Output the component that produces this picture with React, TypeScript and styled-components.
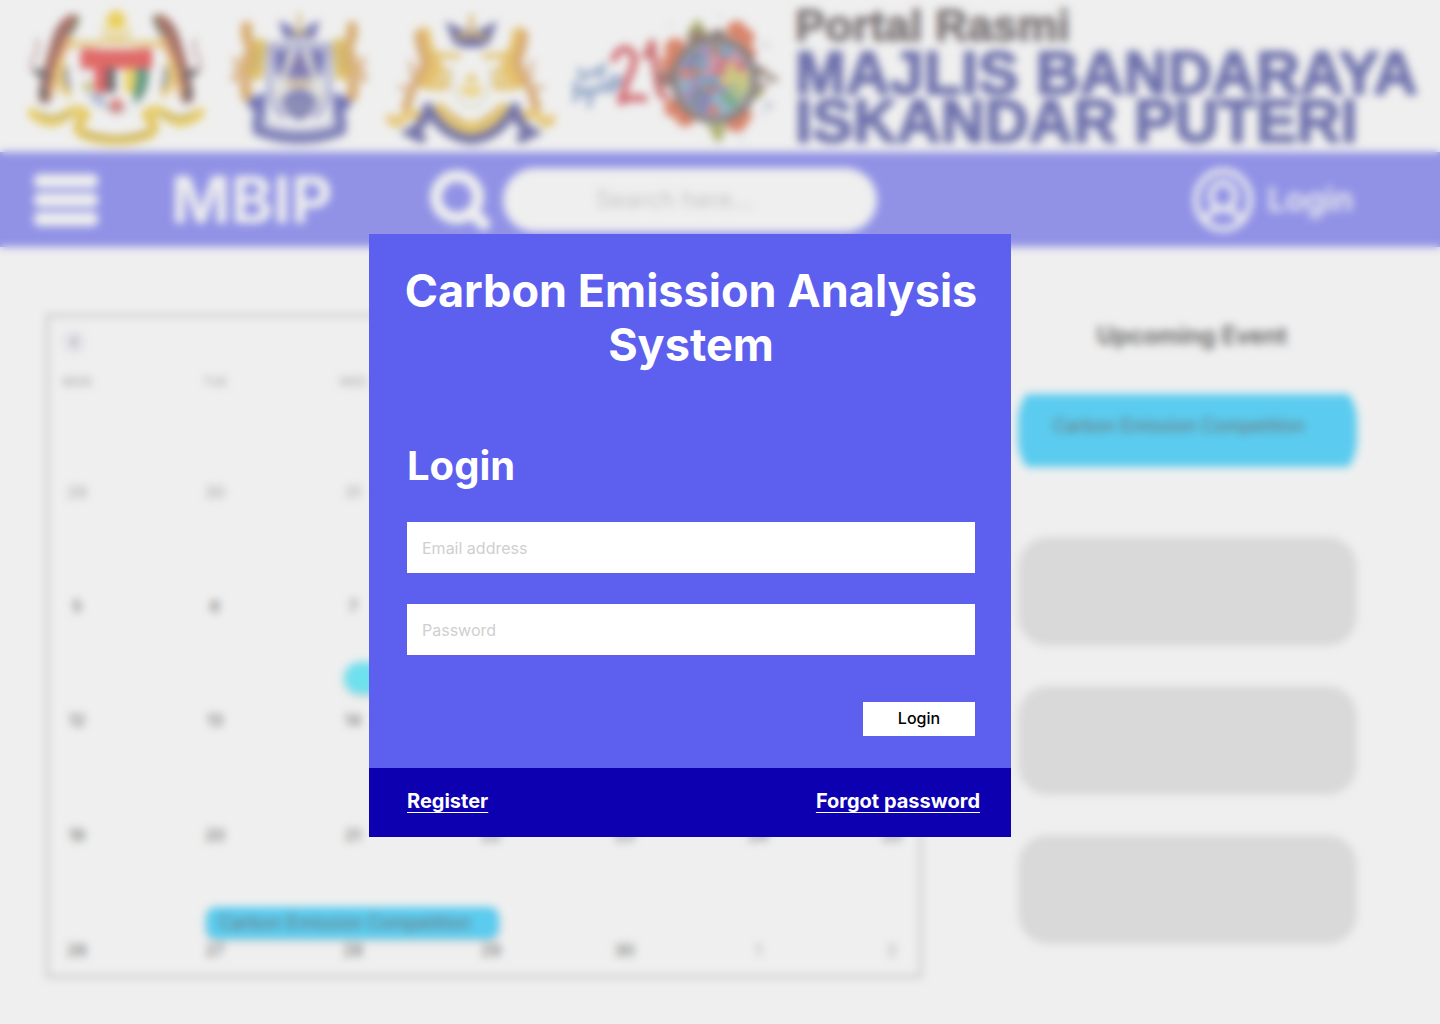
import React from "react";
import styled, { createGlobalStyle } from "styled-components";
import { ChevronLeft } from "lucide-react";

const GlobalStyle = createGlobalStyle`
  *, *::before, *::after { box-sizing: border-box; }
  body {
    margin: 0;
    background: #ffffff;
    font-family: Inter, "Liberation Sans", sans-serif;
  }
  h1, h2, h3, p, ul { margin: 0; padding: 0; }
  button, input { font-family: inherit; }
`;

const Page = styled.div`
  min-height: 100vh;
  background: #ffffff;
`;

/* ---------- banner ---------- */

const Banner = styled.header`
  display: flex;
  align-items: flex-start;
  gap: 16px;
  height: 152px;
  padding: 8px 0 0 28px;
  overflow: hidden;
`;

const Crest = styled.svg`
  flex: none;
  height: 140px;
`;

const BannerText = styled.div`
  flex: none;
  font-family: "Liberation Sans", Arial, sans-serif;
  font-weight: 700;
  white-space: nowrap;
`;

const BannerKicker = styled.p`
  margin-bottom: 5px;
  font-size: 45px;
  line-height: 36px;
  color: #33262b;
  -webkit-text-stroke: 1px currentColor;
`;

const BannerName = styled.p`
  font-size: 61px;
  line-height: 48px;
  color: #23288c;
  -webkit-text-stroke: 2px currentColor;
`;

/* ---------- navigation ---------- */

const NavBar = styled.nav`
  display: flex;
  align-items: center;
  height: 95px;
  padding: 0 87px 0 34px;
  background: #5d5fef;
  color: #ffffff;
`;

const MenuButton = styled.button`
  display: flex;
  flex-direction: column;
  gap: 5px;
  width: 64px;
  padding: 0;
  border: 0;
  background: none;
`;

const MenuBar = styled.span`
  height: 14px;
  border-radius: 5px;
  background: #ffffff;
`;

const Brand = styled.span`
  margin-left: 73px;
  font-size: 64px;
  line-height: 76px;
  font-weight: 700;
`;

const SearchForm = styled.form`
  display: flex;
  align-items: center;
  gap: 13px;
  margin-left: 98px;
`;

const SearchInput = styled.input`
  width: 374px;
  height: 64px;
  padding: 0 92px;
  border: 0;
  border-radius: 32px;
  background: #ffffff;
  font-size: 24px;
  &::placeholder { color: #b8b8b8; opacity: 1; }
`;

const AccountLink = styled.a`
  display: flex;
  align-items: center;
  gap: 14px;
  margin-left: auto;
  color: #ffffff;
  font-size: 32px;
  line-height: 40px;
  font-weight: 600;
  text-decoration: none;
`;

/* ---------- calendar and events ---------- */

const Main = styled.main`
  display: flex;
  align-items: flex-start;
  gap: 96px;
  padding: 67px 83px 46px 46px;
`;

const Calendar = styled.section`
  flex: 1;
  min-width: 0;
  padding: 13px 12px 0 13px;
  border: 3px solid #b8b8b8;
`;

const MonthButton = styled.button`
  display: grid;
  place-items: center;
  width: 24px;
  height: 24px;
  padding: 0;
  border: 0;
  border-radius: 50%;
  background: #ececf6;
  color: #55556a;
`;

const MonthTable = styled.table`
  width: 100%;
  margin-top: 19px;
  border-collapse: collapse;
  table-layout: fixed;
`;

const WideCol = styled.col`width: 138px;`;
const LastCol = styled.col`width: 30px;`;

const WeekRow = styled.tr<{ $height: number }>`
  height: ${(p) => p.$height}px;
`;

const DayHead = styled.th`
  padding: 0;
  vertical-align: top;
  text-align: left;
  font-size: 12px;
  line-height: 18px;
  font-weight: 500;
  color: #8c8c8c;
`;

const DayCell = styled.td<{ $muted: boolean }>`
  position: relative;
  padding: 0;
  vertical-align: top;
  font-size: 16px;
  line-height: 18px;
  font-weight: 500;
  color: ${(p) => (p.$muted ? "#8c8c8c" : "#262626")};
`;

const DayLabel = styled.span`
  display: block;
  width: 30px;
  text-align: center;
`;

const CalendarEvent = styled.span<{
  $tone: string;
  $top: number;
  $width: number;
  $round: number;
}>`
  position: absolute;
  top: ${(p) => p.$top}px;
  left: 6px;
  width: ${(p) => p.$width}px;
  height: 32px;
  padding-left: 13px;
  border-radius: ${(p) => p.$round}px;
  background: ${(p) => p.$tone};
  box-shadow: 0 2px 4px rgba(0, 0, 0, 0.25);
  color: #222222;
  font-size: 18px;
  line-height: 31px;
  font-weight: 400;
  white-space: nowrap;
`;

const Aside = styled.aside`
  width: 339px;
`;

const AsideTitle = styled.h2`
  padding: 7px 0 0 9px;
  font-size: 24px;
  line-height: 29px;
  font-weight: 600;
  text-align: center;
  color: #000000;
`;

const EventCard = styled.article`
  position: relative;
  z-index: 0;
  height: 73px;
  margin: 44px 0 70px;
  padding: 20px 35px;
  overflow: hidden;
  font-size: 18px;
  line-height: 24px;
  color: #222222;
  white-space: nowrap;
  &::before {
    content: "";
    position: absolute;
    inset: -18px 0;
    z-index: -1;
    border-radius: 44px;
    background: #00c2ff;
  }
`;

const EmptyCard = styled.div`
  height: 109px;
  border-radius: 30px;
  background: #d9d9d9;
  & + & { margin-top: 40px; }
`;

/* ---------- login dialog ---------- */

const Overlay = styled.div`
  position: fixed;
  inset: 0;
  display: flex;
  justify-content: center;
  align-items: flex-start;
  padding: 234px 60px 0 0;
  background: rgba(217, 217, 217, 0.42);
  backdrop-filter: blur(4px);
`;

const Dialog = styled.section`
  width: 642px;
  background: #5d5fef;
`;

const DialogBody = styled.form`
  display: flex;
  flex-direction: column;
  padding: 30px 36px 32px 38px;
`;

const DialogTitle = styled.h1`
  margin: 0 -8px 70px;
  color: #ffffff;
  font-size: 45px;
  line-height: 54px;
  font-weight: 700;
  text-align: center;
`;

const DialogHeading = styled.h2`
  margin-bottom: 32px;
  color: #ffffff;
  font-size: 40px;
  line-height: 48px;
  font-weight: 700;
`;

const Field = styled.input`
  width: 100%;
  height: 51px;
  padding: 0 15px;
  border: 0;
  border-radius: 0;
  background: #ffffff;
  color: #000000;
  font-size: 16px;
  & + & { margin-top: 31px; }
  &::placeholder { color: #cfcfcf; opacity: 1; }
`;

const SubmitButton = styled.button`
  align-self: flex-end;
  width: 112px;
  height: 34px;
  margin-top: 47px;
  padding: 0 0 2px;
  border: 0;
  background: #ffffff;
  color: #000000;
  font-size: 16px;
  font-weight: 500;
`;

const DialogFooter = styled.footer`
  display: flex;
  justify-content: space-between;
  align-items: center;
  height: 69px;
  padding: 0 31px 4px 38px;
  background: #0c00b1;
`;

const FooterLink = styled.a`
  color: #ffffff;
  font-size: 20px;
  line-height: 24px;
  font-weight: 700;
  text-decoration: underline;
  text-decoration-thickness: 1px;
  text-underline-offset: 4px;
  text-decoration-skip-ink: none;
`;

/* ---------- drawings ---------- */

const FederalHalf = () => (
  <g fill="none" strokeLinecap="round">
    <path d="M216 62C182 80 174 120 160 170S136 250 134 292" stroke="#8a2a1c" strokeWidth="38" />
    <path d="M206 118C184 156 168 205 150 286" stroke="#e88a2c" strokeWidth="20" />
    <path d="M232 52C228 72 218 90 208 102" stroke="#4a4a20" strokeWidth="14" />
    <path d="M180 80l16 12M170 110l18 10M162 140l16 10M150 190l14 8M142 230l12 8" stroke="#3c1c14" strokeWidth="7" />
    <path d="M110 118C128 150 86 180 96 206Q106 226 132 220" stroke="#a86c6c" strokeWidth="8" />
    <path d="M112 216l26 10M130 260l6 34" stroke="#1c1c22" strokeWidth="20" />
    <path d="M186 190C174 220 178 262 206 282" stroke="#efc030" strokeWidth="20" />
    <path d="M200 205Q194 235 208 262" stroke="#222233" strokeWidth="10" />
    <path d="M214 138C240 118 262 136 280 132Q310 120 348 130" stroke="#e6b82c" strokeWidth="15" />
    <path d="M96 338Q150 384 190 350T258 344" stroke="#f0c418" strokeWidth="30" />
    <path d="M120 340Q160 356 214 346" stroke="#a08414" strokeWidth="8" />
    <path d="M246 358Q228 372 242 398Q290 420 348 420" stroke="#e8b808" strokeWidth="30" />
    <path d="M258 400Q300 412 348 412" stroke="#a08414" strokeWidth="9" />
  </g>
);

const FederalCrest = () => (
  <Crest viewBox="84 24 552 420" width="184" role="img" aria-label="Malaysia coat of arms">
    <path d="M306 82A46 40 0 0 0 392 82" fill="none" stroke="#f2dc70" strokeWidth="14" />
    <circle cx="348" cy="58" r="25" fill="#f6c400" />
    <path d="M348 26l6 14 14-8-2 16 16 2-10 12 12 12-18 2 2 16-14-8-6 14-6-14-14 8 2-16-18-2 12-12-10-12 16-2-2-16 14 8z" fill="#f6c800" />
    <path d="M310 98Q348 124 388 98" fill="none" stroke="#ecc850" strokeWidth="10" />
    <path d="M250 195V240Q262 320 348 344Q436 320 446 240V195Z" fill="#ffffff" stroke="#c8c8cc" strokeWidth="4" />
    <path d="M242 144Q348 156 456 144V206H242Z" fill="#e41414" />
    <path d="M268 178h12M300 180h12M336 180h12M372 180h12M408 178h12" stroke="#f08030" strokeWidth="7" />
    <path d="M284 200h36v78h-36z" fill="#e01010" />
    <path d="M320 204h26v74h-26z" fill="#101018" />
    <path d="M374 206h32v72h-32z" fill="#f6cc10" />
    <path d="M408 206h38q2 76-42 106l-4-36q8-16 8-36z" fill="#0c6840" />
    <path d="M262 282l46-2 16 44Q282 314 262 282z" fill="#8ca4d0" />
    <circle cx="264" cy="260" r="14" fill="#a8a828" />
    <circle cx="349" cy="318" r="22" fill="#e03838" />
    <path d="M322 324h54" stroke="#708068" strokeWidth="6" />
    <FederalHalf />
    <g transform="translate(696 0) scale(-1 1)"><FederalHalf /></g>
  </Crest>
);

const CityHalf = () => (
  <g fill="none" strokeLinecap="round">
    <path d="M740 80Q736 120 758 142Q726 186 740 290" stroke="#d8902c" strokeWidth="34" />
    <path d="M780 134L770 222" stroke="#dcac18" strokeWidth="38" />
    <path d="M762 160l22 8M762 190l18 6" stroke="#8c6a30" strokeWidth="6" />
    <path d="M704 176Q720 200 700 236L736 244" stroke="#dca060" strokeWidth="15" />
    <path d="M808 140V250Q816 330 850 350" stroke="#5a5fae" strokeWidth="12" />
    <path d="M822 148h56l-44 92q-12-40-12-92z" fill="#2c2c98" />
    <path d="M868 160L838 300" stroke="#e0dcc0" strokeWidth="12" />
    <path d="M752 302l38-14V340l-36-20z" fill="#2c309c" stroke="#2c309c" strokeWidth="16" />
    <path d="M774 354V390Q830 414 898 414" stroke="#3c409e" strokeWidth="34" />
    <path d="M796 326L800 368Q840 388 898 388" stroke="#9a9ecc" strokeWidth="8" />
    <path d="M842 68l24 12 28 20v12h-38z" fill="#2c2c98" stroke="#2c2c98" strokeWidth="7" />
  </g>
);

const CityCrest = () => (
  <Crest viewBox="684 24 426 420" width="142" role="img" aria-label="Iskandar Puteri City Council crest">
    <path d="M826 146h144v120Q966 340 898 366Q830 340 826 266z" fill="#e8e8f2" />
    <path d="M898 134l40 100h-80z" fill="#3c3898" />
    <path d="M864 240h68v22h-68z" fill="#b89860" />
    <path d="M842 300Q898 234 954 300Q944 350 898 360Q852 350 842 300z" fill="#44459a" />
    <path d="M852 308h92M860 328h76" stroke="#9094ac" strokeWidth="5" />
    <path d="M898 184v12" stroke="#b02040" strokeWidth="12" />
    <path d="M804 134h188" stroke="#6c70b4" strokeWidth="12" />
    <CityHalf />
    <g transform="translate(1796 0) scale(-1 1)"><CityHalf /></g>
    <path d="M898 40V90M872 104Q898 86 924 104" fill="none" stroke="#c8a448" strokeWidth="12" />
  </Crest>
);

const StateHalf = () => (
  <g fill="none" strokeLinecap="round">
    <path d="M130 104Q130 140 152 170Q172 210 134 244" stroke="#eeb020" strokeWidth="46" />
    <path d="M116 106Q122 150 136 184Q126 220 98 262L78 322" stroke="#d4882c" strokeWidth="27" />
    <path d="M58 262h52M88 186Q106 204 92 226" stroke="#d89c64" strokeWidth="13" />
    <path d="M160 166L234 168M168 232L202 250M150 262h46M180 200l24 24" stroke="#e8b020" strokeWidth="17" />
    <path d="M32 356Q50 380 70 354T116 350" stroke="#f0bc38" strokeWidth="30" />
    <path d="M144 322Q134 376 92 398L124 414" stroke="#2a2a84" strokeWidth="30" />
    <path d="M180 330Q218 384 274 384" stroke="#ecb828" strokeWidth="42" />
    <path d="M148 330Q196 412 274 418" stroke="#2e2e84" strokeWidth="30" />
    <path d="M196 326l24 28M230 346l14 36" stroke="#c89428" strokeWidth="8" />
    <path d="M204 72l38 20 28 4v34h-44z" fill="#24247e" stroke="#24247e" strokeWidth="9" />
    <path d="M216 200Q210 310 274 324" stroke="#d0d0a8" strokeWidth="7" />
  </g>
);

const StateCrest = () => (
  <Crest viewBox="18 24 507 420" width="169" role="img" aria-label="Johor coat of arms">
    <StateHalf />
    <g transform="translate(548 0) scale(-1 1)"><StateHalf /></g>
    <path d="M274 44v46M230 114Q274 90 318 114" fill="none" stroke="#d49c30" strokeWidth="15" />
    <path d="M240 254A34 34 0 1 0 308 254Q274 282 240 254Z" fill="#f6bc08" />
    <path d="M274 214l8 15 16 2-12 12 3 16-15-8-15 8 3-16-12-12 16-2z" fill="#f0c040" />
    <path d="M240 136h68" stroke="#2c2c84" strokeWidth="12" />
  </Crest>
);

const mosaicTones = [
  "#2c78b8", "#e0341c", "#ecb81c", "#7a50a4", "#28884c", "#dc5c7c", "#3c3ca4",
  "#ccd028", "#8c4424", "#50a0c8", "#d42838", "#344468", "#90b040",
];

const mosaicRings = [
  { count: 1, radius: 0 },
  { count: 6, radius: 30 },
  { count: 12, radius: 60 },
  { count: 18, radius: 90 },
];

const mosaicTiles = mosaicRings.flatMap(({ count, radius }, ring) =>
  Array.from({ length: count }, (_, i) => ({
    x: Math.round(1004 + radius * Math.cos((i * 2 * Math.PI) / count + ring)),
    y: Math.round(240 + radius * Math.sin((i * 2 * Math.PI) / count + ring)),
    tone: mosaicTones[(i * 5 + ring * 3) % mosaicTones.length],
  })),
);

const FestivalLogo = () => (
  <Crest viewBox="573 24 624 420" width="208" role="img" aria-label="Visit Johor festival">
    <g fill="none" strokeLinecap="round" strokeLinejoin="round">
      <path d="M600 208q4 42 20 22t16-12 16-6 10 12 10-30M588 246q-6 50 6 30t20 10q10-30 18-14t16-2 14-4 12-6 14 4 22-12 10-8M632 284l-4 34M590 286l-6 16M700 228q-10 28 12 26" stroke="#6c8cc0" strokeWidth="15" />
      <path d="M702 176Q722 134 750 152T744 236L722 304Q756 288 792 296" stroke="#cc2430" strokeWidth="22" />
      <path d="M798 168L816 128L832 240Q836 286 856 290" stroke="#c42c30" strokeWidth="22" />
    </g>
    <g fill="#d8481c">
      <circle cx="886" cy="146" r="32" />
      <circle cx="868" cy="190" r="26" />
      <circle cx="1070" cy="92" r="30" />
      <circle cx="1098" cy="112" r="26" />
      <circle cx="1102" cy="160" r="26" />
      <circle cx="880" cy="324" r="28" />
      <circle cx="916" cy="350" r="30" />
      <circle cx="1070" cy="364" r="32" />
      <circle cx="1092" cy="346" r="24" />
    </g>
    <g fill="#8c9424">
      <path d="M918 104l34-50 34 50z" />
      <path d="M980 374h64l-28 60z" />
      <circle cx="1134" cy="280" r="14" />
    </g>
    <circle cx="954" cy="118" r="32" fill="#6c4c28" />
    <circle cx="1014" cy="112" r="26" fill="#5c4434" />
    <circle cx="858" cy="236" r="26" fill="#7c3c34" />
    <circle cx="1004" cy="240" r="132" fill="#4c3c3c" />
    <circle cx="1004" cy="240" r="112" fill="#8490a8" />
    {mosaicTiles.map(({ x, y, tone }, i) => (
      <circle key={i} cx={x} cy={y} r="15" fill={tone} />
    ))}
    <path d="M1126 224q26-16 40 4t26 4M1124 262q30 14 28-18M1128 204l26 6" fill="none" stroke="#70503c" strokeWidth="15" />
    <g fill="#c0c4dc">
      <circle cx="870" cy="74" r="6" /><circle cx="1020" cy="46" r="6" />
      <circle cx="1158" cy="136" r="9" /><circle cx="1166" cy="316" r="14" />
      <circle cx="1086" cy="420" r="6" /><circle cx="1146" cy="340" r="7" />
    </g>
  </Crest>
);

const SearchIcon = () => (
  <svg width="60" height="60" viewBox="0 0 60 60" fill="none" aria-hidden="true">
    <circle cx="27" cy="27" r="21" stroke="#fff" strokeWidth="12" />
    <path d="M43 43l11 11" stroke="#fff" strokeWidth="13" strokeLinecap="round" />
  </svg>
);

const UserIcon = () => (
  <svg width="60" height="64" viewBox="0 0 60 64" fill="none" stroke="#fff" strokeWidth="6" aria-hidden="true">
    <ellipse cx="30" cy="32" rx="27" ry="29" />
    <ellipse cx="30" cy="28" rx="12" ry="13" />
    <path d="M12 53Q17 41 30 41T48 53" />
  </svg>
);

/* ---------- data ---------- */

const dayNames = ["MON", "TUE", "WED", "THU", "FRI", "SAT", "SUN"];
const weeks = [
  [29, 30, 31, 1, 2, 3, 4],
  [5, 6, 7, 8, 9, 10, 11],
  [12, 13, 14, 15, 16, 17, 18],
  [19, 20, 21, 22, 23, 24, 25],
  [26, 27, 28, 29, 30, 1, 2],
];

const isOtherMonth = (week: number, day: number) =>
  (week === 0 && day > 20) || (week === 4 && day < 20);

export default function App() {
  return (
    <>
      <GlobalStyle />
      <Page>
        <Banner>
          <FederalCrest />
          <CityCrest />
          <StateCrest />
          <FestivalLogo />
          <BannerText>
            <BannerKicker>Portal Rasmi</BannerKicker>
            <BannerName>MAJLIS BANDARAYA</BannerName>
            <BannerName>ISKANDAR PUTERI</BannerName>
          </BannerText>
        </Banner>

        <NavBar>
          <MenuButton type="button" aria-label="Menu">
            <MenuBar />
            <MenuBar />
            <MenuBar />
          </MenuButton>
          <Brand>MBIP</Brand>
          <SearchForm role="search">
            <SearchIcon />
            <SearchInput type="search" aria-label="Search" placeholder="Search here..." />
          </SearchForm>
          <AccountLink href="#login">
            <UserIcon />
            Login
          </AccountLink>
        </NavBar>

        <Main>
          <Calendar>
            <MonthButton type="button" aria-label="Previous month">
              <ChevronLeft size={16} strokeWidth={3} />
            </MonthButton>
            <MonthTable>
              <colgroup>
                <WideCol />
                <WideCol />
                <WideCol />
                <col />
                <col />
                <col />
                <LastCol />
              </colgroup>
              <thead>
                <WeekRow $height={110}>
                  {dayNames.map((name) => (
                    <DayHead key={name} scope="col">
                      <DayLabel>{name}</DayLabel>
                    </DayHead>
                  ))}
                </WeekRow>
              </thead>
              <tbody>
                {weeks.map((days, week) => (
                  <WeekRow key={week} $height={week === 4 ? 34 : week < 2 ? 114 : 115}>
                    {days.map((day) => (
                      <DayCell key={day} $muted={isOtherMonth(week, day)}>
                        <DayLabel>{day}</DayLabel>
                        {week === 1 && day === 7 && (
                          <CalendarEvent $tone="#24e5fd" $top={65} $width={160} $round={16} />
                        )}
                        {week === 3 && day === 20 && (
                          <CalendarEvent $tone="#00c2ff" $top={81} $width={293} $round={10}>
                            Carbon Emission Competition
                          </CalendarEvent>
                        )}
                      </DayCell>
                    ))}
                  </WeekRow>
                ))}
              </tbody>
            </MonthTable>
          </Calendar>

          <Aside>
            <AsideTitle>Upcoming Event</AsideTitle>
            <EventCard>Carbon Emission Competition</EventCard>
            <EmptyCard />
            <EmptyCard />
            <EmptyCard />
          </Aside>
        </Main>
      </Page>

      <Overlay>
        <Dialog role="dialog" aria-modal="true" aria-labelledby="dialog-title">
          <DialogBody>
            <DialogTitle id="dialog-title">Carbon Emission Analysis System</DialogTitle>
            <DialogHeading>Login</DialogHeading>
            <Field type="email" aria-label="Email address" placeholder="Email address" />
            <Field type="password" aria-label="Password" placeholder="Password" />
            <SubmitButton type="submit">Login</SubmitButton>
          </DialogBody>
          <DialogFooter>
            <FooterLink href="#register">Register</FooterLink>
            <FooterLink href="#forgot">Forgot password</FooterLink>
          </DialogFooter>
        </Dialog>
      </Overlay>
    </>
  );
}
